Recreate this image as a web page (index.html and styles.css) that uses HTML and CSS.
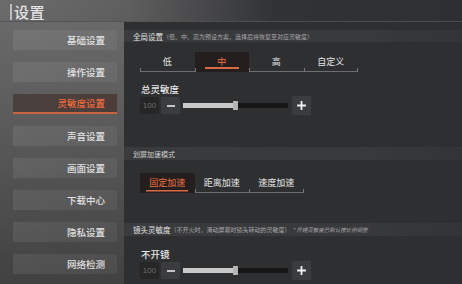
FILE: index.html
```html
<!DOCTYPE html>
<html lang="zh">
<head>
<meta charset="utf-8">
<link rel="stylesheet" href="styles.css">
</head>
<body>
<div class="app">
  <header class="header"><h1 class="title">设置</h1></header>
  <nav class="sidebar">
    <div class="nav-item">基础设置</div>
    <div class="nav-item">操作设置</div>
    <div class="nav-item active">灵敏度设置</div>
    <div class="nav-item">声音设置</div>
    <div class="nav-item">画面设置</div>
    <div class="nav-item">下载中心</div>
    <div class="nav-item">隐私设置</div>
    <div class="nav-item">网络检测</div>
  </nav>
  <main class="panel">
    <div class="band band-1"><span class="band-title">全局设置</span><span class="band-note">（低、中、高为预设方案，选择后将恢复至对应灵敏度）</span></div>
    <div class="tabs tabs-1">
      <div class="tab">低</div>
      <div class="tab active">中</div>
      <div class="tab">高</div>
      <div class="tab">自定义</div>
    </div>
    <div class="label label-1">总灵敏度</div>
    <div class="slider-row">
      <div class="value">100</div>
      <div class="btn minus"><svg viewBox="0 0 10 10" width="10" height="10"><path d="M1 5H9" stroke="#e6e6e6" stroke-width="1.6"/></svg></div>
      <div class="track"><div class="fill" style="width:50px"></div><div class="thumb"></div></div>
      <div class="btn plus"><svg viewBox="0 0 10 10" width="11" height="11"><path d="M1 5H9M5 1V9" stroke="#f2f2f2" stroke-width="1.6"/></svg></div>
    </div>
    <div class="band band-2"><span class="band-small">划屏加速模式</span></div>
    <div class="tabs tabs-2">
      <div class="tab active">固定加速</div>
      <div class="tab">距离加速</div>
      <div class="tab">速度加速</div>
    </div>
    <div class="band band-3"><span class="band-title">镜头灵敏度</span><span class="band-note">（不开火时，滑动屏幕时镜头转动的灵敏度）</span><span class="band-italic">* 开镜灵敏度已默认按比例调整</span></div>
    <div class="label label-2">不开镜</div>
    <div class="slider-row">
      <div class="value">100</div>
      <div class="btn minus"><svg viewBox="0 0 10 10" width="10" height="10"><path d="M1 5H9" stroke="#e6e6e6" stroke-width="1.6"/></svg></div>
      <div class="track"><div class="fill" style="width:50px"></div><div class="thumb"></div></div>
      <div class="btn plus"><svg viewBox="0 0 10 10" width="11" height="11"><path d="M1 5H9M5 1V9" stroke="#f2f2f2" stroke-width="1.6"/></svg></div>
    </div>
  </main>
</div>
</body>
</html>
```

FILE: styles.css
```css
* { box-sizing: border-box; margin: 0; padding: 0; }
html, body { width: 462px; height: 284px; overflow: hidden; }
body {
  font-family: "Noto Sans CJK SC", "Noto Sans", sans-serif;
  background: linear-gradient(180deg, #6c6c6c 0%, #5a5a5a 45%, #414141 100%);
  color: #ddd;
}
.app {
  display: grid;
  grid-template-columns: 124px 338px;
  grid-template-rows: 22px 262px;
  height: 284px;
}
.header {
  grid-column: 1 / 3;
  display: flex;
  align-items: flex-end;
  padding: 0 0 1px 10px;
  background: linear-gradient(90deg, rgba(110,110,110,0) 0%, rgba(70,70,72,0.35) 28%, #313234 60%, #2e2f31 100%);
  border-bottom: 1px solid rgba(80,81,83,0.8);
}
.title {
  font-size: 15px;
  font-weight: 500;
  line-height: 16px;
  color: #e4e4e4;
  border-left: 2px solid #bdbdbd;
  padding-left: 2px;
  letter-spacing: 0.5px;
}
.sidebar {
  display: flex;
  flex-direction: column;
  gap: 12px;
  padding: 8px 7px 0 13px;
}
.nav-item {
  height: 20px;
  line-height: 20px;
  text-align: right;
  padding-right: 12px;
  font-size: 9.5px;
  font-weight: 500;
  color: #e2e2e2;
  background: linear-gradient(90deg, rgba(255,255,255,0.08), rgba(255,255,255,0.05));
}
.nav-item.active {
  color: #ef6a3c;
  background: linear-gradient(90deg, rgba(60,45,40,0.6), rgba(70,50,45,0.75));
  border-bottom: 2px solid #c9653f;
  line-height: 18px;
}
.panel {
  background: #2e2f31;
  display: flex;
  flex-direction: column;
  padding-top: 8px;
}
.band {
  height: 13px;
  display: flex;
  align-items: center;
  padding-left: 9px;
  background: linear-gradient(90deg, #3a3b3d 0%, #38393b 70%, #333436 100%);
  white-space: nowrap;
}
.band-title { font-size: 7.5px; color: #e4e4e4; }
.band-note { font-size: 6px; color: #a8a8a8; }
.band-italic { font-size: 5.5px; color: #a8a8a8; font-style: italic; margin-left: 2px; }
.band-small { font-size: 7px; color: #cfcfcf; }
.band-1 { height: 12px; }
.band-2 { margin-top: 33px; }
.band-3 { margin-top: 30px; }
.tabs {
  display: flex;
  margin-left: 16px;
  height: 20px;
}
.tabs-1 { margin-top: 10px; }
.tabs-2 { margin-top: 13px; }
.tab {
  position: relative;
  width: 54.5px;
  height: 20px;
  line-height: 20px;
  text-align: center;
  font-size: 9px;
  color: #e6e6e6;
  border-bottom: 1px solid #6d6d6d;
}
.tab::before {
  content: "";
  position: absolute;
  left: 0;
  bottom: -1px;
  width: 1px;
  height: 4px;
  background: #777;
}
.tab:last-child::after {
  content: "";
  position: absolute;
  right: 0;
  bottom: -1px;
  width: 1px;
  height: 4px;
  background: #777;
}
.tabs-2 .tab:first-child::before { display: none; }
.tab.active {
  color: #f07040;
  background-color: #241f1e;
  border-bottom-color: #241f1e;
  background-image: linear-gradient(#d76a45, #d76a45);
  background-repeat: no-repeat;
  background-size: 34px 2px;
  background-position: center calc(100% - 2px);
}
.tabs-2 .tab.active {
  background-size: 42px 1.5px;
  background-position: center calc(100% - 1px);
}
.label {
  margin-left: 17px;
  font-size: 9.5px;
  line-height: 12px;
  color: #e8e8e8;
  font-weight: 500;
}
.label-1 { margin-top: 11px; }
.label-2 { margin-top: 12px; }
.slider-row {
  display: flex;
  align-items: center;
  margin-left: 16px;
  margin-top: 2px;
  height: 17px;
}
.value {
  width: 19px;
  height: 17px;
  line-height: 17px;
  background: #262627;
  color: #6f6f6f;
  font-family: "Liberation Sans", sans-serif;
  font-size: 8px;
  text-align: center;
}
.btn {
  width: 19px;
  height: 17px;
  background: #3b3c3e;
  display: flex;
  align-items: center;
  justify-content: center;
}
.minus { margin-left: 2px; }
.plus { margin-left: 4px; height: 19px; }
.track {
  margin-left: 3px;
  width: 105px;
  height: 5px;
  background: #161616;
  display: flex;
  align-items: center;
}
.fill {
  height: 5px;
  background: #c9c9c9;
}
.thumb {
  width: 5px;
  height: 9px;
  background: #b5b5b5;
  flex: none;
}
```
